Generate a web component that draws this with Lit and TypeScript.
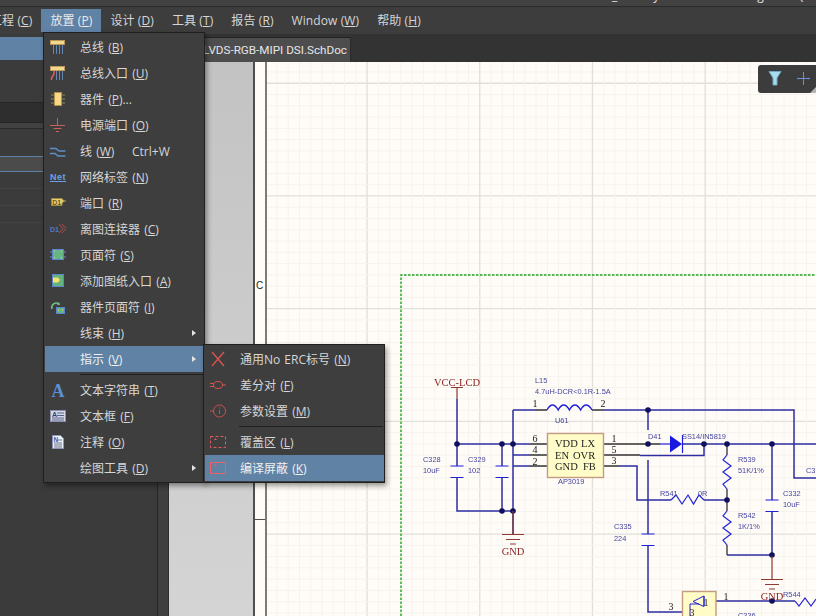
import { LitElement, html, css, svg } from 'lit';
import { customElement } from 'lit/decorators.js';

const ICONS: Record<string, unknown> = {
	bus: svg`<rect x="0.5" y="1.5" width="14" height="4" fill="#f5d98a" stroke="#b9975a"/><path d="M3.5 6v9M6.500 6v9M9.500 6v9M12.500 6v9" stroke="#6a9ad8" stroke-width="0.8" fill="none"/>`,
	entry: svg`<rect x="0.5" y="1.5" width="14" height="4" fill="#f5d98a" stroke="#c09a60"/><path d="M6.500 6v9M9.500 6v9M12.500 6v9" stroke="#6a9ad8" stroke-width="0.8" fill="none"/><path d="M4 6v3L1.500 13v2" stroke="#e0604f" stroke-width="1.500" fill="none"/>`,
	part: svg`<path d="M1 4h3M1 8h3M1 12h3M12 4h3M12 8h3M12 12h3" stroke="#8f8a50" fill="none"/><rect x="4.5" y="1.5" width="7" height="13" fill="#f8d788" stroke="#b0924f"/>`,
	power: svg`<path d="M7.500 1v7M0 8.500h15M3.500 11.500h8M6 14.500h3" stroke="#c9605c" fill="none"/>`,
	wire: svg`<path d="M0 5.500h6l3 2.500h6.500M0 10.500h5l3 2.500h7.500" stroke="#5c8ec8" stroke-width="1.500" fill="none"/>`,
	port: svg`<path d="M1.500 3.500h10.500l2 2.500-2 2.500v2h-10.500z" fill="#e9cc72" stroke="#a08a3c"/><path d="M13 6h3" stroke="#c8a846"/><text x="6.800" y="9.500" font-size="7" font-weight="700" text-anchor="middle" fill="#6a5a20" font-family="Liberation Sans">D1</text>`,
	offsheet: svg`<text x="0" y="10.500" font-size="7" font-weight="700" fill="#5078c0" font-family="Liberation Sans">D1</text><path d="M9 3l4 4.500-4 4.500M12 3l4 4.500-4 4.500" stroke="#b84a4a" fill="none"/>`,
	sheet: svg`<rect x="2.500" y="2.500" width="11" height="10" fill="#67b583" stroke="#5a84cc"/><path d="M0 5h2M0 10h2M14 5h2M14 10h2" stroke="#6a90d0"/><path d="M4 4h1M11 4h1M4 11h1M11 11h1" stroke="#e8e0a0"/>`,
	sheetEntry: svg`<rect x="2.500" y="1.500" width="11" height="12" fill="#63b27f" stroke="#5a84cc"/><path d="M3 4.500h5l2 2.500-2 2.500h-5z" fill="#f4e26a"/>`,
	deviceSheet: svg`<path d="M2 10a4.500 4.500 0 0 1 7-5" stroke="#6fc08a" stroke-width="1.500" fill="none"/><path d="M9 3l1 3-3 0z" fill="#6fc08a"/><rect x="6.500" y="8.500" width="8" height="6" fill="#63b27f" stroke="#5a84cc"/><path d="M8 11h1M12 11h1" stroke="#f0e48a"/>`,
	textA: svg`<text x="8" y="15" font-size="18" font-weight="700" text-anchor="middle" fill="#5b8fd6" font-family="Liberation Serif">A</text>`,
	frame: svg`<rect x="0.500" y="2.500" width="15" height="11" fill="#d5d8e8" stroke="#8a90b0"/><text x="2" y="9" font-size="7" font-weight="700" fill="#34406a" font-family="Liberation Sans">A</text><path d="M7 5h7M7 7.500h7M2 10h12M2 12h12" stroke="#5a6488"/>`,
	note: svg`<path d="M2.500 1.500h8l3 3v10h-11z" fill="#eef0f8" stroke="#8f96b4"/><text x="3.500" y="7.500" font-size="6.500" font-weight="700" fill="#3058b0" font-family="Liberation Sans">N</text><path d="M8 6h4M4 9h8M4 11h8M4 13h8" stroke="#6a7290"/>`,
};

const SUB_ICONS: Record<string, unknown> = {
	x: svg`<path d="M3 2l12 14M15 2L3 16" stroke="#d9534f" stroke-width="1.400" fill="none"/>`,
	diff: svg`<path d="M1 7.500h4M1 10.500h4M13 9h4" stroke="#d9534f" fill="none"/><ellipse cx="9" cy="9" rx="4.500" ry="3.500" stroke="#d9534f" fill="none"/>`,
	param: svg`<path d="M1 9h4" stroke="#c9504c"/><circle cx="10.500" cy="9" r="6" stroke="#c9504c" fill="none"/><path d="M10.500 8v4M10.500 5.500v1" stroke="#c9504c"/>`,
	cover: svg`<rect x="1.500" y="3.500" width="15" height="11" stroke="#e05a5a" stroke-dasharray="3 2" fill="none"/><path d="M5 7l1.500-2 1.500 2z" fill="#e05a5a"/>`,
	mask: svg`<rect x="1.500" y="3.500" width="15" height="11" stroke="#ef5f5f" fill="none"/><path d="M5 7l1.500-2 1.500 2z" fill="#ef5f5f"/>`,
};

interface Entry {
	icon?: string;
	name: string;
	key: string;
	tail?: string;
	shortcut?: string;
	arrow?: boolean;
	active?: boolean;
	sep?: boolean;
}

const MAIN: Entry[] = [
	{ icon: 'bus', name: '总线', key: 'B' },
	{ icon: 'entry', name: '总线入口', key: 'U' },
	{ icon: 'part', name: '器件', key: 'P', tail: '...' },
	{ icon: 'power', name: '电源端口', key: 'O' },
	{ icon: 'wire', name: '线', key: 'W', shortcut: 'Ctrl+W' },
	{ icon: 'net', name: '网络标签', key: 'N' },
	{ icon: 'port', name: '端口', key: 'R' },
	{ icon: 'offsheet', name: '离图连接器', key: 'C' },
	{ icon: 'sheet', name: '页面符', key: 'S' },
	{ icon: 'sheetEntry', name: '添加图纸入口', key: 'A' },
	{ icon: 'deviceSheet', name: '器件页面符', key: 'I' },
	{ name: '线束', key: 'H', arrow: true },
	{ name: '指示', key: 'V', arrow: true, active: true, sep: true },
	{ icon: 'textA', name: '文本字符串', key: 'T' },
	{ icon: 'frame', name: '文本框', key: 'F' },
	{ icon: 'note', name: '注释', key: 'O' },
	{ name: '绘图工具', key: 'D', arrow: true },
];

const SUB: Entry[] = [
	{ icon: 'x', name: '通用No ERC标号', key: 'N' },
	{ icon: 'diff', name: '差分对', key: 'F' },
	{ icon: 'param', name: '参数设置', key: 'M', sep: true },
	{ icon: 'cover', name: '覆盖区', key: 'L' },
	{ icon: 'mask', name: '编译屏蔽', key: 'K', active: true },
];

const TOP_MENU: [string, string, boolean?][] = [
	['工程', 'C'],
	['放置', 'P', true],
	['设计', 'D'],
	['工具', 'T'],
	['报告', 'R'],
	['Window', 'W'],
	['帮助', 'H'],
];

const BLUE = '#2e2ea2';
const STEP = 11.27;

function gridLines() {
	const out = [];
	for (let i = 0; i < 50; i++) {
		const x = 276.9 + i * STEP;
		const y = 72 + i * STEP;
		const xMajor = (i - 8) % 10 === 0;
		const yMajor = (i - 1) % 10 === 0;
		out.push(svg`<path d="M${x} 62V616" stroke=${xMajor ? '#e0dfd9' : '#f5f3ed'} stroke-width=${xMajor ? 1.3 : 1}/>`);
		out.push(svg`<path d="M267 ${y}H816" stroke=${yMajor ? '#e0dfd9' : '#f5f3ed'} stroke-width=${yMajor ? 1.3 : 1}/>`);
	}
	return out;
}

function dots(points: [number, number][]) {
	return points.map(([x, y]) => svg`<circle cx=${x} cy=${y} r="2.800" fill="#10105c"/>`);
}

function label(x: number, y: number, text: string, size = 7.4) {
	return svg`<text x=${x} y=${y} font-size=${size} fill="#4545a0" font-family="Liberation Sans">${text}</text>`;
}

function pin(x: number, y: number, text: string) {
	return svg`<text x=${x} y=${y} font-size="10" fill="#222" text-anchor="middle" font-family="Liberation Serif">${text}</text>`;
}

function gnd(x: number, y: number) {
	return svg`<path d="M${x} ${y - 23}V${y}M${x - 11} ${y + 0.5}H${x + 11}M${x - 7} ${y + 5.5}H${x + 7}M${x - 3} ${y + 10}H${x + 3}" stroke="#8f3a30" stroke-width="1.200" fill="none"/>
		<text x=${x} y=${y + 21} font-size="10.500" fill="#8a1c1c" text-anchor="middle" font-family="Liberation Serif">GND</text>`;
}

function capV(x: number, y: number) {
	return svg`<path d="M${x - 6.500} ${y}H${x + 6.500}M${x - 6.500} ${y + 11.500}H${x + 6.500}" stroke="#2020d8" stroke-width="1.200" fill="none"/>`;
}

@customElement('app-root')
export class AppRoot extends LitElement {
	static styles = css`
		:host {
			display: block;
			position: relative;
			width: 816px;
			height: 616px;
			overflow: hidden;
			background: #3c3c3c;
			font-family: 'Open Sans', 'Noto Sans CJK SC', sans-serif;
			font-size: 12px;
			color: #d6d6d6;
		}
		u {
			text-underline-offset: 1px;
		}
		.title {
			height: 6px;
			background: #424242;
			border-bottom: 1px solid #2a2a2a;
			overflow: hidden;
		}
		.title-text {
			display: flex;
			margin-top: -13px;
			padding-left: 612px;
			color: #e4e4e4;
		}
		.title-text span + span {
			margin-left: 36px;
		}
		.title-text span:nth-child(3) {
			margin-left: 98px;
		}
		.menubar {
			display: flex;
			height: 27px;
			margin-left: -19px;
			background: #3d3d3d;
		}
		.top-item {
			padding: 2px 9px 0;
			margin-top: 2px;
			height: 21px;
			line-height: 20px;
			white-space: nowrap;
			letter-spacing: 0.1px;
		}
		.top-item.on {
			background: #5f82a5;
			color: #eaeaea;
		}
		.body {
			display: flex;
			height: 582px;
		}
		.panel {
			width: 157px;
			border-right: 1px solid #262626;
			padding-top: 3px;
			background: #3b3b3b;
		}
		.panel-blue {
			height: 23px;
			background: #5f82a5;
		}
		.panel-head {
			height: 19px;
			margin-top: 42px;
			background: #2e2e2e;
			border-top: 1px solid #252525;
			border-bottom: 1px solid #252525;
		}
		.panel-strip {
			height: 5px;
			background: #414141;
			border-bottom: 1px solid #2a2a2a;
		}
		.panel-sel {
			height: 14px;
			margin-top: 27px;
			background: #4b4b4b;
			border-top: 1px solid #5f82a5;
			border-bottom: 1px solid #5f82a5;
		}
		.panel-row {
			height: 16px;
			border-bottom: 1px solid #444;
		}
		.splitter {
			width: 10px;
			background: #3f3f3f;
			border-right: 1px solid #2e2e2e;
		}
		.doc {
			flex: 1;
			display: flex;
			flex-direction: column;
			min-width: 0;
		}
		.tabs {
			display: flex;
			height: 28px;
			background: #333;
			align-items: flex-end;
			flex: none;
		}
		.tab {
			box-sizing: border-box;
			width: 182px;
			height: 25px;
			background: #4d4d4d;
			border-top: 1px solid #222;
			border-right: 1px solid #2a2a2a;
			border-radius: 0 2px 0 0;
			display: flex;
			justify-content: flex-end;
			align-items: center;
			padding: 0 3px 1px 0;
			color: #e6e6e6;
			font-family: Roboto, sans-serif;
			font-size: 11.7px;
			white-space: nowrap;
			overflow: hidden;
		}
		.work {
			flex: 1;
			display: flex;
			min-height: 0;
		}
		.gutter {
			width: 84px;
			flex: none;
			background: linear-gradient(#c3c3c3, #d4d4d4);
		}
		.ruler {
			box-sizing: border-box;
			width: 14px;
			flex: none;
			position: relative;
			background: #fffcf7;
			border-left: 2px solid #4f4f4d;
			border-right: 2px solid #7b7b78;
			color: #222;
			font: 10px 'Liberation Sans', sans-serif;
		}
		.ruler-c {
			position: absolute;
			top: 218px;
			left: 1px;
		}
		.ruler-tick {
			position: absolute;
			left: 0;
			right: 0;
			top: 457px;
			height: 1px;
			background: #4f4f4d;
		}
		.canvas {
			flex: 1;
			position: relative;
			background: #fffcf7;
			overflow: hidden;
		}
		.canvas svg {
			display: block;
			filter: blur(0.35px);
		}
		.filter {
			position: absolute;
			top: 3px;
			right: 0;
			width: 58px;
			height: 28px;
			background: #3c3c3c;
			border-radius: 3px 0 0 3px;
		}
		.canvas .filter svg {
			filter: none;
		}
		.menu {
			position: absolute;
			box-sizing: border-box;
			background: #3e3e3e;
			border: 1px solid #1f1f1f;
			padding: 1px 0;
			box-shadow: 2px 3px 5px rgba(0, 0, 0, 0.4);
		}
		.menu.main {
			left: 43px;
			top: 32px;
			width: 162px;
		}
		.menu.sub {
			left: 203px;
			top: 344px;
			width: 182px;
		}
		.row {
			display: flex;
			align-items: center;
			height: 26px;
			margin-left: 1px;
			white-space: nowrap;
			position: relative;
			word-spacing: 1px;
		}
		.main .row {
			padding-left: 5px;
		}
		.sub .row {
			padding-left: 4px;
		}
		.row.on {
			background: #5f82a5;
			color: #f0f0f0;
		}
		.ico {
			width: 16px;
			height: 16px;
			flex: none;
			margin-right: 14px;
			display: flex;
			align-items: center;
			justify-content: center;
		}
		.sub .ico {
			width: 18px;
			height: 18px;
			margin-right: 13px;
		}
		.net {
			font: 700 9px 'Liberation Sans', sans-serif;
			color: #6ba0e6;
			letter-spacing: 0.5px;
			text-decoration: underline;
		}
		.shortcut {
			position: absolute;
			left: 87px;
		}
		.arrow {
			position: absolute;
			right: 8px;
			top: 10px;
			width: 0;
			height: 0;
			border-left: 4px solid #e4e4e4;
			border-top: 3.5px solid transparent;
			border-bottom: 3.5px solid transparent;
		}
		.sep {
			height: 1px;
			background: #222;
		}
		.main .sep {
			margin: 2px 1px 2px 36px;
		}
		.sub .sep {
			margin: 2px 1px 2px 35px;
		}
	`;

	renderRow(e: Entry, icons: Record<string, unknown>, box: number) {
		return html`<div class="row ${e.active ? 'on' : ''}">
				<span class="ico">
					${e.icon === 'net'
						? html`<span class="net">Net</span>`
						: e.icon
						? html`<svg width=${box} height=${box} viewBox="0 0 ${box} ${box}">${icons[e.icon]}</svg>`
						: ''}
				</span>
				<span>${e.name} (<u>${e.key}</u>)${e.tail ?? ''}</span>
				${e.shortcut ? html`<span class="shortcut">${e.shortcut}</span>` : ''}
				${e.arrow ? html`<span class="arrow"></span>` : ''}
			</div>
			${e.sep ? html`<div class="sep"></div>` : ''}`;
	}

	renderSchematic() {
		return svg`
			${gridLines()}
			<path d="M401 616V275H816" stroke="#1fa51f" stroke-width="1.400" stroke-dasharray="2.500 1.500" fill="none"/>

			<text x="457" y="386" font-size="10.500" fill="#8a1c1c" text-anchor="middle" font-family="Liberation Serif">VCC-LCD</text>
			<path d="M451 387.500H463M457 388V399" stroke="#8f3a30" stroke-width="1.200" fill="none"/>

			<g stroke=${BLUE} stroke-width="1.500" fill="none">
				<path d="M457 399V466M457 478V511H513M502 444V466M502 478V511"/>
				<path d="M457 444H530M513 410V534"/>
				<path d="M513 410H535M603 410H794V478H816"/>
				<path d="M513 455H530M530 466H513"/>
				<path d="M648 410V430M648 460V534M648 545V612H682"/>
				<path d="M682 444H816M704 444V455.500H640"/>
				<path d="M620 466H637V500H671M704 500H727"/>
				<path d="M772 444V500M772 512V556M727 555H772"/>
				<path d="M716 601H795"/>
			</g>
			<g stroke="#333" stroke-width="1.300" fill="none">
				<path d="M530 444H547M530 455H547M530 466H547M535 410H547M592 410H603"/>
				<path d="M603 444H660M603 455H640M603 466H620"/>
				<path d="M727 444V455M727 489V511M727 545V555"/>
			</g>
			${capV(457, 466)}
			${capV(502, 466)}
			${capV(772, 500)}
			${capV(648, 534)}

			<path d="M547 410q5.500-10 11.200 0q5.500-10 11.200 0q5.500-10 11.200 0q5.500-10 11.400 0" stroke="#2020d8" stroke-width="1.400" fill="none"/>
			<rect x="547.500" y="433.500" width="56" height="44" fill="#fffcc8" stroke="#c49a80" stroke-width="1.400"/>
			<text x="555" y="447" font-size="10.500" fill="#222" font-family="Liberation Serif">VDD</text>
			<text x="581" y="447" font-size="10.500" fill="#222" font-family="Liberation Serif">LX</text>
			<text x="555" y="459" font-size="10.500" fill="#222" font-family="Liberation Serif">EN</text>
			<text x="573" y="459" font-size="10.500" fill="#222" font-family="Liberation Serif">OVR</text>
			<text x="555" y="470" font-size="10.500" fill="#222" font-family="Liberation Serif">GND</text>
			<text x="583" y="470" font-size="10.500" fill="#222" font-family="Liberation Serif">FB</text>

			<path d="M660 444H670" stroke="#2020d8" stroke-width="1.200"/>
			<path d="M670 435.500V452.500L682 444Z" fill="#1818e0"/>
			<path d="M682.500 435V453" stroke="#1818e0" stroke-width="1.200"/>

			<path d="M671 500l5-5 6 9 6-9 5.500 9 5.500-9 5 5" stroke="#2020d8" stroke-width="1.200" fill="none"/>
			<path d="M727 455l-4 5 8 6-8 6 8 6-8 6 4 5" stroke="#2020d8" stroke-width="1.200" fill="none"/>
			<path d="M727 511l-4 5 8 6-8 6 8 6-8 6 4 5" stroke="#2020d8" stroke-width="1.200" fill="none"/>
			<path d="M795 601l4 5 6-8 6 8 5-7" stroke="#2020d8" stroke-width="1.200" fill="none"/>

			${dots([
				[457, 444], [502, 444], [513, 444], [502, 511], [513, 511], [648, 410],
				[648, 444], [704, 444], [727, 444], [772, 444], [727, 500], [772, 555], [772, 601],
			])}
			${gnd(513, 534)}
			${gnd(772, 579)}

			<rect x="682.500" y="591.500" width="33.500" height="30" fill="#fffcc8" stroke="#c49a80" stroke-width="1.400"/>
			<path d="M704 596V606M704 596L693 601.500L704 606.500ZM690 604V616M690 604H699" stroke="#2020d8" fill="none"/>
			${pin(706, 606, '1')}
			${pin(692, 616, '3')}

			${label(535, 383, 'L15')}
			${label(535, 394, '4.7uH-DCR<0.1R-1.5A')}
			${label(555, 423, 'U61')}
			${label(558, 484, 'AP3019')}
			${label(423, 462, 'C328')}
			${label(423, 473, '10uF')}
			${label(468, 462, 'C329')}
			${label(468, 473, '102')}
			${label(648, 439, 'D41')}
			${label(682, 439, 'SS14/IN5819')}
			${label(660, 496, 'R541')}
			${label(698, 496, '0R')}
			${label(738, 462, 'R539')}
			${label(738, 473, '51K/1%')}
			${label(738, 518, 'R542')}
			${label(738, 529, '1K/1%')}
			${label(783, 496, 'C332')}
			${label(783, 507, '10uF')}
			${label(806, 473, 'C33')}
			${label(614, 529, 'C335')}
			${label(614, 541, '224')}
			${label(783, 597, 'R544')}
			${label(738, 618, 'C336')}

			${pin(535, 407, '1')}
			${pin(603, 407, '2')}
			${pin(535, 442, '6')}
			${pin(535, 453, '4')}
			${pin(535, 465, '2')}
			${pin(614, 442, '1')}
			${pin(614, 453, '5')}
			${pin(614, 464, '3')}
			${pin(671, 610, '3')}
			${pin(726, 600, '1')}
		`;
	}

	render() {
		return html`
			<div class="title">
				<div class="title-text"><span>_</span><span>y</span><span>g</span><span>(</span></div>
			</div>
			<div class="menubar">
				${TOP_MENU.map(
					([name, key, on]) => html`<div class="top-item ${on ? 'on' : ''}">${name} (<u>${key}</u>)</div>`
				)}
			</div>
			<div class="body">
				<div class="panel">
					<div class="panel-blue"></div>
					<div class="panel-head"></div>
					<div class="panel-strip"></div>
					<div class="panel-sel"></div>
					<div class="panel-row"></div>
					<div class="panel-row"></div>
					<div class="panel-row"></div>
				</div>
				<div class="splitter"></div>
				<div class="doc">
					<div class="tabs"><div class="tab">: LVDS-RGB-MIPI DSI.SchDoc</div></div>
					<div class="work">
						<div class="gutter"></div>
						<div class="ruler"><span class="ruler-c">C</span><span class="ruler-tick"></span></div>
						<div class="canvas">
							<svg width="549" height="554" viewBox="267 62 549 554">${this.renderSchematic()}</svg>
							<div class="filter">
								<svg width="58" height="28" viewBox="0 0 58 28">
									<path d="M11 6.500H23L19 13V20H15V13Z" fill="#a8dcec" stroke="#6fa8c0"/>
									<path d="M39 13.500H52M45.500 7V20" stroke="#6a8fd8"/>
									<path d="M42.500 13.500l-2-1v2zM48.500 13.500l2-1v2z" fill="#6a8fd8"/>
									<path d="M58 22V28H52Z" fill="#b5b5b5"/>
								</svg>
							</div>
						</div>
					</div>
				</div>
			</div>
			<div class="menu main">${MAIN.map((e) => this.renderRow(e, ICONS, 16))}</div>
			<div class="menu sub">${SUB.map((e) => this.renderRow(e, SUB_ICONS, 18))}</div>
		`;
	}
}
